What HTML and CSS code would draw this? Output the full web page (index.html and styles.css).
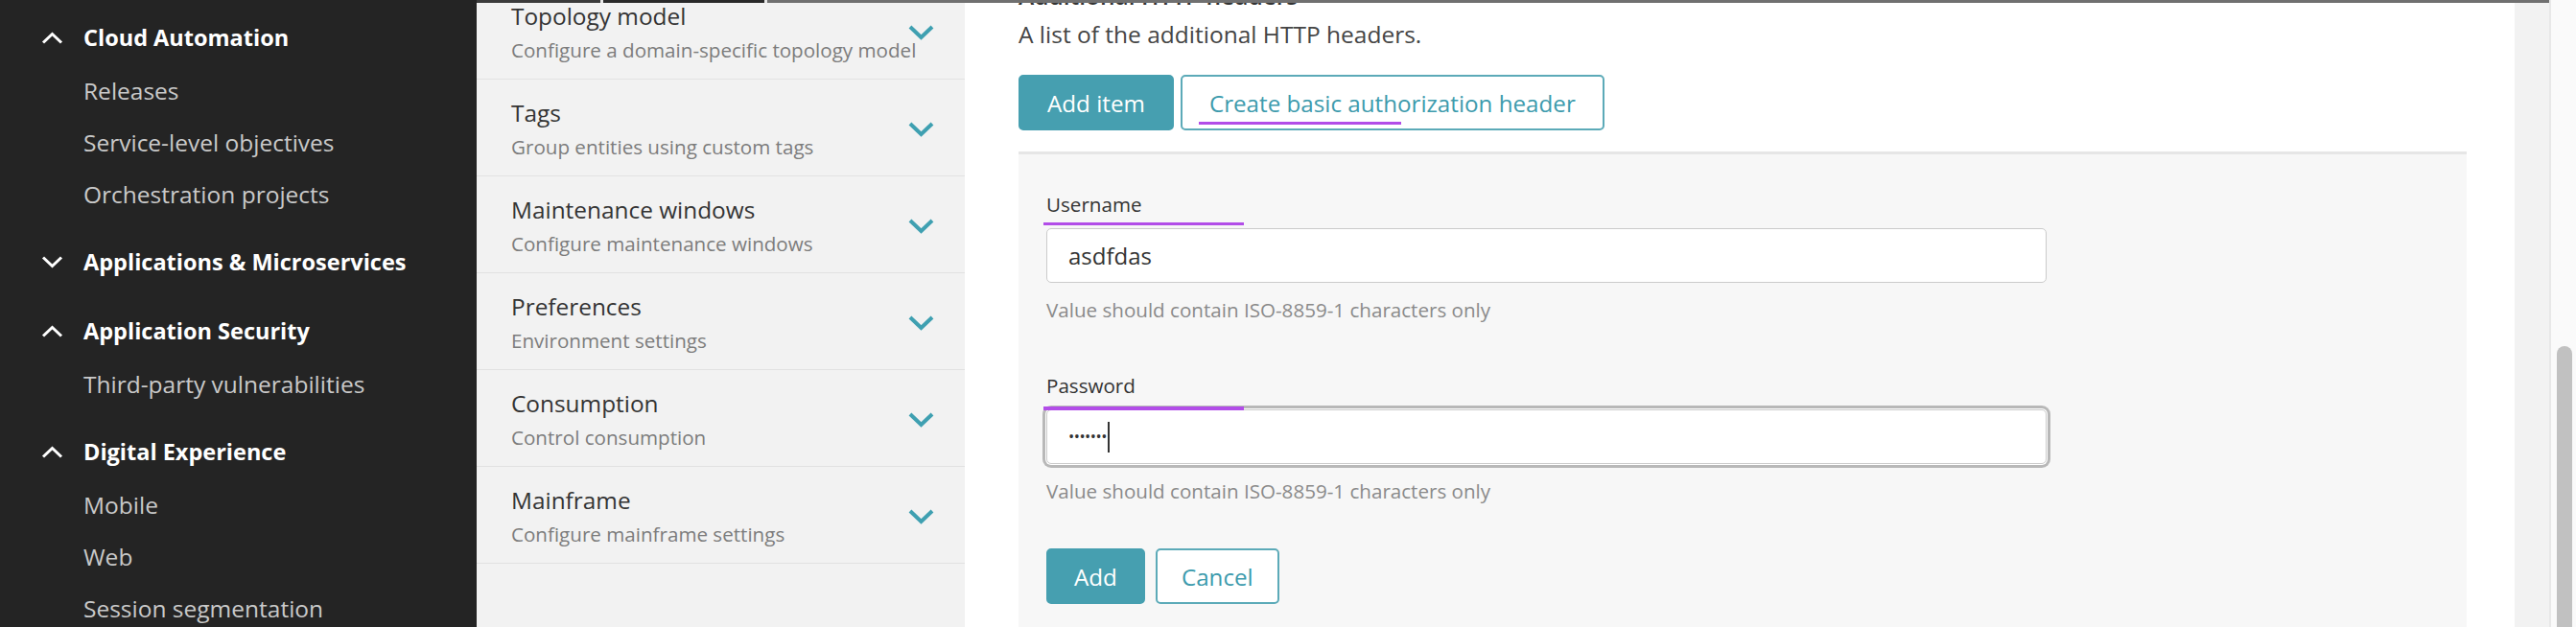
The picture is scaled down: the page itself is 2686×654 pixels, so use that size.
FILE: index.html
```html
<!DOCTYPE html>
<html lang="en">
<head>
<meta charset="utf-8">
<title>Settings</title>
<link rel="stylesheet" href="styles.css">
</head>
<body>
<div class="app">
  <nav class="sidebar">
    <div class="group">
      <div class="group-head"><svg viewBox="0 0 23 13"><polyline points="2,11.5 11.5,2.5 21,11.5"/></svg><span>Cloud Automation</span></div>
      <div class="group-item">Releases</div>
      <div class="group-item">Service-level objectives</div>
      <div class="group-item">Orchestration projects</div>
    </div>
    <div class="group">
      <div class="group-head"><svg viewBox="0 0 23 13"><polyline points="2,1.5 11.5,10.5 21,1.5"/></svg><span>Applications &amp; Microservices</span></div>
    </div>
    <div class="group">
      <div class="group-head"><svg viewBox="0 0 23 13"><polyline points="2,11.5 11.5,2.5 21,11.5"/></svg><span>Application Security</span></div>
      <div class="group-item">Third-party vulnerabilities</div>
    </div>
    <div class="group">
      <div class="group-head"><svg viewBox="0 0 23 13"><polyline points="2,11.5 11.5,2.5 21,11.5"/></svg><span>Digital Experience</span></div>
      <div class="group-item">Mobile</div>
      <div class="group-item">Web</div>
      <div class="group-item">Session segmentation</div>
    </div>
  </nav>

  <div class="workspace">
    <div class="topbar"><div class="tb-a"></div><div class="tb-b"></div><div class="tb-c"></div></div>
    <div class="work-row">
      <div class="settings-nav">
        <div class="nav-list">
          <div class="nav-item"><div class="nav-text"><div class="nav-title">Topology model</div><div class="nav-sub">Configure a domain-specific topology model</div></div><svg class="nav-chev" viewBox="0 0 27 16"><polyline points="2,2 13.5,13 25,2"/></svg></div>
          <div class="nav-item"><div class="nav-text"><div class="nav-title">Tags</div><div class="nav-sub">Group entities using custom tags</div></div><svg class="nav-chev" viewBox="0 0 27 16"><polyline points="2,2 13.5,13 25,2"/></svg></div>
          <div class="nav-item"><div class="nav-text"><div class="nav-title">Maintenance windows</div><div class="nav-sub">Configure maintenance windows</div></div><svg class="nav-chev" viewBox="0 0 27 16"><polyline points="2,2 13.5,13 25,2"/></svg></div>
          <div class="nav-item"><div class="nav-text"><div class="nav-title">Preferences</div><div class="nav-sub">Environment settings</div></div><svg class="nav-chev" viewBox="0 0 27 16"><polyline points="2,2 13.5,13 25,2"/></svg></div>
          <div class="nav-item"><div class="nav-text"><div class="nav-title">Consumption</div><div class="nav-sub">Control consumption</div></div><svg class="nav-chev" viewBox="0 0 27 16"><polyline points="2,2 13.5,13 25,2"/></svg></div>
          <div class="nav-item"><div class="nav-text"><div class="nav-title">Mainframe</div><div class="nav-sub">Configure mainframe settings</div></div><svg class="nav-chev" viewBox="0 0 27 16"><polyline points="2,2 13.5,13 25,2"/></svg></div>
        </div>
      </div>

      <main class="content">
        <div class="section-title">Additional HTTP headers</div>
        <div class="section-desc">A list of the additional HTTP headers.</div>
        <div class="btn-row">
          <div class="btn btn-primary">Add item</div>
          <div class="btn btn-secondary">Create basic authorization header<span class="mark mark-btn"></span></div>
        </div>
        <div class="form-panel">
          <div class="field">
            <div class="field-label">Username<span class="mark mark-user"></span></div>
            <div class="field-input">asdfdas</div>
            <div class="help">Value should contain ISO-8859-1 characters only</div>
          </div>
          <div class="field">
            <div class="field-label">Password<span class="mark mark-pass"></span></div>
            <div class="field-input focused"><span class="dots">•••••••</span><span class="caret"></span></div>
            <div class="help">Value should contain ISO-8859-1 characters only</div>
          </div>
          <div class="form-actions">
            <div class="btn btn-primary btn-small">Add</div>
            <div class="btn btn-secondary btn-small btn-cancel">Cancel</div>
          </div>
        </div>
      </main>

      <div class="gutter"></div>
    </div>
  </div>

  <div class="scrollbar"><div class="thumb"></div></div>
</div>
</body>
</html>
```

FILE: styles.css
```css
* { box-sizing: border-box; margin: 0; padding: 0; }
html, body { width: 2686px; height: 654px; overflow: hidden; }
body { font-family: "Open Sans", "Noto Sans", sans-serif; background: #fff; color: #333; }

.app { display: flex; height: 654px; }

/* sidebar */
.sidebar { width: 497px; flex: none; background: #242424; padding-top: 10px; overflow: hidden; }
.group { margin-bottom: 14px; }
.group-head { height: 58px; display: flex; align-items: center; padding-left: 43px; gap: 21px; color: #fff; font-weight: 700; font-size: 23.5px; white-space: nowrap; }
.group-head svg { width: 23px; height: 13px; flex: none; }
.group-head polyline { fill: none; stroke: #fff; stroke-width: 3; }
.group-item { height: 54px; line-height: 54px; padding-left: 87px; color: #c9c9c9; font-size: 24.5px; white-space: nowrap; }

/* workspace */
.workspace { width: 2161px; flex: none; display: flex; flex-direction: column; }
.topbar { height: 3px; display: flex; flex: none; background: #e6e6e6; }
.tb-a { width: 129px; background: #3b3b3b; }
.tb-b { width: 168px; background: #2a2a2a; margin-left: 3px; }
.tb-c { flex: 1; background: #707070; margin-left: 3px; }
.work-row { flex: 1; display: flex; min-height: 0; }

/* settings nav */
.settings-nav { width: 509px; flex: none; background: #f2f2f2; overflow: hidden; }
.nav-list { margin-top: -21px; }
.nav-item { height: 101px; border-bottom: 1px solid #e2e2e2; display: flex; align-items: center; padding: 3px 32px 0 36px; }
.nav-text { flex: 1; min-width: 0; white-space: nowrap; }
.nav-title { font-size: 24.4px; line-height: 34px; color: #343434; }
.nav-sub { font-size: 20.6px; line-height: 30px; color: #7c7c7c; margin-top: 3px; }
.nav-chev { width: 27px; height: 16px; flex: none; }
.nav-chev polyline { fill: none; stroke: #3fa0b1; stroke-width: 4; }

/* content */
.content { flex: 1; background: #fff; padding: 0 50px 0 56px; overflow: hidden; }
.section-title { font-size: 24.5px; line-height: 34px; font-weight: 600; color: #333; margin-top: -24px; }
.section-desc { font-size: 24.5px; line-height: 34px; color: #454545; margin-top: 6px; }
.btn-row { display: flex; gap: 7px; margin-top: 25px; }
.btn { position: relative; height: 58px; border-radius: 5px; font-size: 24.2px; padding: 0 28px; display: flex; align-items: center; border: 2px solid #469fb0; white-space: nowrap; }
.btn-primary { background: #469fb0; color: #fff; }
.btn-secondary { background: #fff; color: #3d9bad; border-color: #5caab8; }
.btn-small { padding: 0 27px; }
.btn-cancel { padding: 0 25px; }

.mark { position: absolute; height: 3px; background: #b24de8; }
.mark-btn { left: 17px; top: 47px; width: 211px; }
.mark-user { left: -3px; top: 34px; width: 209px; }
.mark-pass { left: -3px; top: 37px; width: 209px; height: 4px; z-index: 2; }

.form-panel { margin-top: 22px; border-top: 3px solid #e6e6e6; background: #f7f7f7; padding: 37px 29px 0; height: 520px; }
.field + .field { margin-top: 49px; }
.field-label { position: relative; font-size: 20.6px; line-height: 30px; color: #333; }
.field-input { margin-top: 10px; width: 1043px; height: 57px; border: 1px solid #cbcbcb; border-radius: 5px; background: #fff; padding-left: 22px; display: flex; align-items: center; font-size: 24px; color: #333; }
.field-input.focused { box-shadow: 0 0 0 1px #fff, 0 0 0 4px #b8b8b8; }
.dots { font-size: 16.5px; line-height: 1; color: #333; letter-spacing: -0.5px; }
.caret { width: 2px; height: 32px; background: #333; margin-left: 1px; }
.help { font-size: 20.6px; line-height: 30px; color: #8a8a8a; margin-top: 13px; white-space: nowrap; }
.form-actions { margin-top: 45px; display: flex; gap: 11px; }

.gutter { width: 36px; flex: none; background: #f2f2f2; }

/* scrollbar */
.scrollbar { width: 28px; flex: none; background: #fafafa; border-left: 2px solid #e8e8e8; padding: 361px 0 0 6px; }
.thumb { width: 16px; height: 400px; background: #c1c1c1; border-radius: 8px 8px 0 0; }
```
